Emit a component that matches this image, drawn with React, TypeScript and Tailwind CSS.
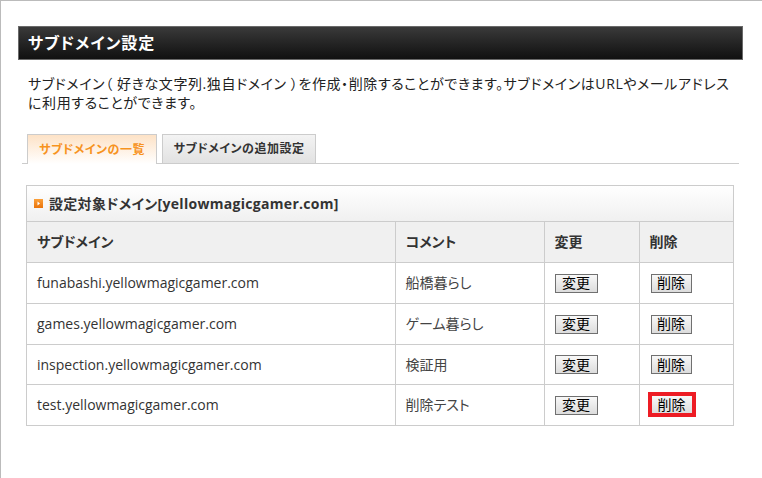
import React from "react";

const rows = [
  { d: "funabashi.yellowmagicgamer.com", c: "船橋暮らし" },
  { d: "games.yellowmagicgamer.com", c: "ゲーム暮らし" },
  { d: "inspection.yellowmagicgamer.com", c: "検証用" },
  { d: "test.yellowmagicgamer.com", c: "削除テスト" },
];

function Btn({ label, w, hl }: { label: string; w: string; hl?: boolean }) {
  if (hl) {
    return (
      <span className="inline-block border-[4px] border-[#ed1c24] leading-none">
        <span className="flex h-[17px] w-[40px] items-center justify-center bg-gradient-to-b from-[#f8f8f8] to-[#dcdcdc] text-[14px] text-black">
          {label}
        </span>
      </span>
    );
  }
  return (
    <span
      className={`inline-flex h-[19px] ${w} items-center justify-center border border-[#707070] bg-gradient-to-b from-[#f8f8f8] to-[#dcdcdc] text-[14px] leading-none text-black`}
    >
      {label}
    </span>
  );
}

export default function App() {
  return (
    <div
      className="h-[478px] w-[762px] overflow-hidden border-l border-t border-[#bbbbbb] bg-white text-[#333] [font-feature-settings:'palt']"
      style={{ fontFamily: '"Open Sans", "Noto Sans CJK JP", sans-serif' }}
    >
      <div className="ml-[17px] mt-[25px] flex h-[34px] w-[725px] items-center border border-[#6a6a6a] bg-gradient-to-b from-[#3a3a3a] to-[#111111] pl-[9px]">
        <span className="text-[16px] font-bold tracking-[1px] text-white">サブドメイン設定</span>
      </div>

      <p className="ml-[27px] mt-[14px] whitespace-nowrap text-[14px] leading-[19px] tracking-[0.6px] text-[#222]">
        サブドメイン（&nbsp;好きな文字列.独自ドメイン&nbsp;）を作成・削除することができます。サブドメインはURLやメールアドレス
        <br />
        に利用することができます。
      </p>

      <div className="ml-[21px] mt-[22px] flex w-[717px] items-end gap-[5px] border-b border-[#cccccc] pl-[5px]">
        <div className="-mb-px flex h-[30px] w-[130px] items-center justify-center border border-b-0 border-[#cccccc] bg-gradient-to-b from-[#fde2c6] to-white text-[12px] font-bold tracking-[0.5px] text-[#f7931e]">
          サブドメインの一覧
        </div>
        <div className="flex h-[29px] w-[154px] items-center justify-center border border-b-0 border-[#cccccc] bg-gradient-to-b from-[#f3f3f3] to-[#e2e2e2] text-[12px] font-bold tracking-[0.5px] text-[#333]">
          サブドメインの追加設定
        </div>
      </div>

      <div className="ml-[25px] mt-[21px] w-[708px] border border-[#cccccc]">
        <div className="flex h-[36px] items-center gap-[6px] border-b border-[#cccccc] bg-gradient-to-b from-white to-[#f0f0f0] pl-[7px]">
          <svg width="9" height="9" viewBox="0 0 9 9">
            <defs>
              <linearGradient id="og" x1="0" y1="0" x2="0" y2="1">
                <stop offset="0" stopColor="#fba03a" />
                <stop offset="1" stopColor="#e9730a" />
              </linearGradient>
            </defs>
            <rect width="9" height="9" fill="url(#og)" />
            <path d="M3.5 2.5 L6 4.5 L3.5 6.5 Z" fill="#fff" />
          </svg>
          <span className="text-[14px] font-bold tracking-[0.3px] text-[#333]">設定対象ドメイン[yellowmagicgamer.com]</span>
        </div>
        <table className="w-full table-fixed border-collapse text-[14px]">
          <colgroup>
            <col className="w-[368px]" />
            <col className="w-[149px]" />
            <col className="w-[95px]" />
            <col />
          </colgroup>
          <thead>
            <tr className="h-[40px] bg-[#f0f0f0]">
              <th className="border-r border-[#cccccc] pl-[10px] text-left font-bold">サブドメイン</th>
              <th className="border-r border-[#cccccc] pl-[10px] text-left font-bold">コメント</th>
              <th className="border-r border-[#cccccc] pl-[10px] text-left font-bold">変更</th>
              <th className="pl-[10px] text-left font-bold">削除</th>
            </tr>
          </thead>
          <tbody>
            {rows.map((r, i) => (
              <tr key={r.d} className={`border-t border-[#cccccc] ${i === 2 ? "h-[40px]" : "h-[41px]"}`}>
                <td className="border-r border-[#cccccc] pl-[10px] text-[#333]">{r.d}</td>
                <td className="border-r border-[#cccccc] pl-[10px] text-[#444]">{r.c}</td>
                <td className="border-r border-[#cccccc] pl-[10px]">
                  <Btn label="変更" w="w-[43px]" />
                </td>
                <td className={i === 3 ? "pl-[8px]" : "pl-[11px]"}>
                  <Btn label="削除" w="w-[41px]" hl={i === 3} />
                </td>
              </tr>
            ))}
          </tbody>
        </table>
      </div>
    </div>
  );
}
